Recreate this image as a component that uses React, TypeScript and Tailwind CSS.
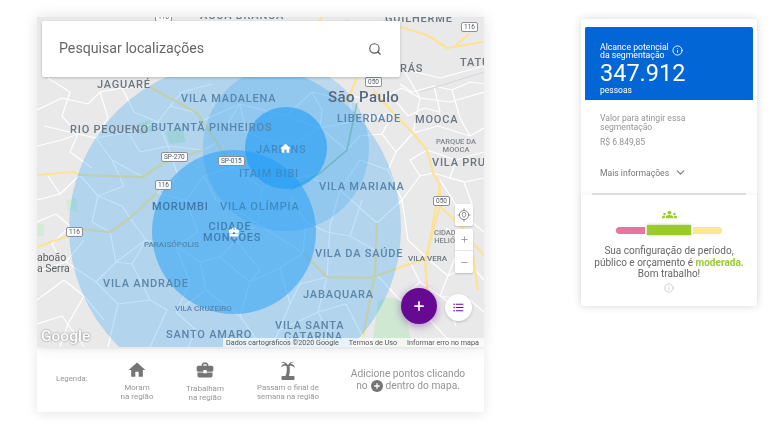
import { ChevronDown, Info, Minus, Plus, Search } from 'lucide-react';
import { MdBusinessCenter, MdFormatListBulleted, MdGroups, MdHome } from 'react-icons/md';

const minorRoads = [
  'M37 110 L62 98 L88 104 L100 92 L122 88 L150 87',
  'M48 78 L70 92 L62 116 L78 134 L70 152 L92 168',
  'M100 92 L108 118 L96 138 L112 160 L143 177',
  'M122 88 L134 112 L158 122 L170 106 L197 113',
  'M37 146 L62 140 L78 134 L96 138 L128 132 L158 122',
  'M158 122 L168 146 L203 150 L217 143',
  'M128 132 L140 152 L168 146',
  'M37 200 L60 194 L80 175 L98 196 L122 206 L130 218',
  'M37 222 L56 214 L70 226',
  'M98 196 L92 222 L110 232',
  'M130 218 L146 240 L176 246 L190 283',
  'M110 232 L116 262 L96 282 L118 304 L108 347',
  'M116 262 L146 240',
  'M118 304 L150 300 L167 310 L150 347',
  'M37 300 L64 280 L84 296 L68 324 L60 347',
  'M37 272 L66 262 L96 282',
  'M37 324 L62 316 L84 347',
  'M176 246 L200 262 L220 257 L250 282 L240 316 L262 347',
  'M157 193 L186 200 L204 176 L233 167',
  'M186 200 L198 232 L176 246',
  'M233 167 L262 188 L258 224 L303 253',
  'M262 188 L306 176 L320 173',
  'M250 282 L280 268 L303 253',
  'M204 120 L240 104 L286 116 L312 92 L357 103',
  'M240 104 L246 132 L286 148 L320 128 L347 150',
  'M286 116 L320 128 L352 122 L393 113',
  'M306 176 L340 190 L377 223',
  'M340 190 L330 226 L327 277',
  'M280 268 L290 304 L272 347',
  'M327 277 L318 312 L336 347',
  'M375 273 L400 300 L430 320 L455 347',
  'M405 72 L420 98 L413 133',
  'M400 68 L440 78 L484 66',
  'M420 98 L450 102 L484 92',
  'M413 133 L438 126 L470 136 L484 128',
  'M427 150 L456 160 L484 152',
  'M433 173 L464 182 L484 178',
  'M440 180 L462 214 L484 232',
  'M427 258 L448 276 L470 264 L484 280',
  'M448 276 L440 296 L470 300',
  'M377 223 L402 200 L420 176 L433 173',
  'M360 160 L388 170 L402 200',
  'M402 200 L408 240 L427 258',
  'M350 96 L378 100 L402 88 L420 98',
  // denser streets
  'M400 84 L412 92 L434 86 L452 90 L470 82 L484 84',
  'M434 86 L440 112 L430 124',
  'M452 90 L460 118 L470 136',
  'M395 100 L408 116 L424 108 L440 112',
  'M393 113 L382 134 L396 152 L388 170',
  'M382 134 L360 136 L347 150',
  'M396 152 L413 133',
  'M456 160 L450 178 L464 182 L472 204',
  'M420 176 L410 160 L427 150',
  'M410 262 L420 282 L404 296',
  'M420 282 L446 300 L456 326',
  'M470 300 L484 312',
  'M446 228 L462 240 L448 276',
  'M60 194 L48 176 M70 226 L52 244 L62 262',
  'M84 296 L104 320',
  'M66 262 L84 240',
  'M146 240 L132 264 L150 300',
  'M132 264 L116 262',
  'M190 283 L176 312 L196 330 L188 347',
  'M200 262 L206 290 L240 316',
  'M206 290 L176 312',
  'M258 224 L236 240 L220 257',
  'M236 240 L260 270 L250 282',
  'M204 176 L216 200 L236 210 L258 224',
  'M168 146 L178 176 L157 193',
  'M112 160 L124 186 L98 196',
  'M78 134 L44 126',
  'M170 106 L182 92 L212 84',
  'M240 104 L226 126 L246 132',
  'M312 92 L322 110 L320 128',
  'M352 122 L350 96',
  'M360 160 L344 184',
  'M362 200 L350 236 L375 250',
  'M350 236 L327 232 L306 222 L303 253',
  'M306 222 L290 196',
  'M327 277 L300 284 L290 304',
  'M318 312 L346 304 L363 337',
  'M280 330 L318 312',
];

const highways = [
  'M400 27 L427 35 L447 48 L483 42',
  'M470 33 L455 46',
  'M357 77 L350 95 L345 102',
  'M373 90 L393 113 L413 133 L427 150 L433 173 L440 185 L440 206',
  'M37 175 L73 172 L80 175 L143 177 L163 163 L203 150',
  'M37 247 L65 237 L80 229 L110 232 L130 218 L157 193',
  'M150 87 L197 113 L217 143 L233 167',
  'M377 223 L375 273 L363 337',
  'M303 253 L327 277 L370 278 L427 258 L433 223 L440 185',
  'M440 206 L470 235 L478 290',
  'M440 206 L425 260 L428 300',
  'M322 17 L312 30 L318 46',
  'M484 255 L470 240',
];

const labels = [
  { text: 'AGUA BRANCA', cls: 'left-[163px] top-[-8px] text-[#6b7682]' },
  { text: 'GUILHERME', cls: 'left-[348px] top-[-5px] text-[#6b7682]' },
  { text: 'TATU', cls: 'left-[423px] top-[39px] text-[#6b7682]' },
  { text: 'RÁS', cls: 'left-[363px] top-[45px] text-[#6b7682]' },
  { text: 'JAGUARÉ', cls: 'left-[60px] top-[61px] text-[#6b7682]' },
  { text: 'VILA MADALENA', cls: 'left-[144px] top-[75px] text-[#5a86ab]' },
  { text: 'RIO PEQUENO', cls: 'left-[33px] top-[106px] text-[#6b7682]' },
  { text: 'BUTANTÃ PINHEIROS', cls: 'left-[114px] top-[104px] text-[#5a86ab]' },
  { text: 'LIBERDADE', cls: 'left-[300px] top-[95px] text-[#5a86ab]' },
  { text: 'MOOCA', cls: 'left-[378px] top-[96px] text-[#6b7682]' },
  { text: 'JARDINS', cls: 'left-[219px] top-[126px] text-[#3f8cc5]' },
  { text: 'VILA PRU', cls: 'left-[395px] top-[139px] text-[#6b7682]' },
  { text: 'ITAIM BIBI', cls: 'left-[202px] top-[150px] text-[#3f8cc5]' },
  { text: 'VILA MARIANA', cls: 'left-[282px] top-[163px] text-[#5a86ab]' },
  { text: 'MORUMBI', cls: 'left-[115px] top-[183px] text-[#3f78a8]' },
  { text: 'VILA OLÍMPIA', cls: 'left-[183px] top-[183px] text-[#3f8cc5]' },
  { text: 'VILA ANDRADE', cls: 'left-[66px] top-[260px] text-[#5a86ab]' },
  { text: 'SANTO AMARO', cls: 'left-[129px] top-[311px] text-[#5a86ab]' },
  { text: 'VILA DA SAÚDE', cls: 'left-[278px] top-[230px] text-[#5a86ab]' },
  { text: 'JABAQUARA', cls: 'left-[266px] top-[271px] text-[#5a86ab]' },
  { text: 'VILA SANTA', cls: 'left-[238px] top-[302px] text-[#5a86ab]' },
  { text: 'CATARINA', cls: 'left-[247px] top-[313px] text-[#5a86ab]' },
];

const smallLabels = [
  { text: 'PARAISÓPOLIS', cls: 'left-[107px] top-[223px] text-[#5a86ab]' },
  { text: 'VILA CRUZEIRO', cls: 'left-[138px] top-[287px] text-[#5a86ab]' },
  { text: 'VILA VERA', cls: 'left-[371px] top-[237px] text-[#6b7682]' },
];

const shields = [
  { text: '116', cls: 'left-[118px] top-[-5px]' },
  { text: '116', cls: 'left-[424px] top-[5px]' },
  { text: '116', cls: 'left-[29px] top-[210px]' },
  { text: '116', cls: 'left-[118px] top-[163px]' },
  { text: '050', cls: 'left-[328px] top-[60px]' },
  { text: '050', cls: 'left-[396px] top-[179px]' },
  { text: 'SP-270', cls: 'left-[124px] top-[135px]' },
  { text: 'SP-015', cls: 'left-[181px] top-[139px]' },
];

function RoadMap() {
  return (
    <svg className="absolute inset-0" width="447" height="330" viewBox="37 17 447 330">
      <rect x="37" y="17" width="447" height="330" fill="#e9e9e9" />
      <path d="M378 302 Q392 292 404 304 L412 347 L372 347 Z" fill="#cfe8d2" />
      <path d="M66 200 L76 198 L78 212 L68 210 Z M37 224 L44 224 L44 236 L37 236 Z" fill="#d6ebd6" />
      <path d="M138 124 L150 120 L152 132 L140 134 Z M166 132 L182 128 L186 142 L170 144 Z" fill="#cde6d2" />
      <g fill="none" stroke="#ffffff" strokeWidth="1.2" strokeLinejoin="round">
        {minorRoads.map((d, i) => (
          <path key={i} d={d} />
        ))}
      </g>
      <g fill="none" stroke="#fde293" strokeWidth="2.2" strokeLinejoin="round">
        {highways.map((d, i) => (
          <path key={i} d={d} />
        ))}
      </g>
      <path d="M357 103 L347 150 L320 173 L290 190" fill="none" stroke="#a9cfa5" strokeWidth="1.6" />
      <path d="M345 20 L372 28 L392 16 M420 92 L484 72" fill="none" stroke="#d5d9de" strokeWidth="1.2" />
      <circle cx="235" cy="228" r="166" fill="#1e9bf5" fillOpacity="0.27" />
      <circle cx="286" cy="148" r="83" fill="#1e9bf5" fillOpacity="0.22" />
      <circle cx="234" cy="232" r="82" fill="#1e9bf5" fillOpacity="0.5" />
      <circle cx="286" cy="148" r="41" fill="#1e9bf5" fillOpacity="0.6" />
    </svg>
  );
}

function MapLabels() {
  return (
    <>
      {labels.map((l) => (
        <span key={l.text} className={`absolute text-[11px] font-medium leading-[14px] tracking-[0.8px] whitespace-nowrap ${l.cls}`}>
          {l.text}
        </span>
      ))}
      {smallLabels.map((l) => (
        <span key={l.text} className={`absolute text-[8px] leading-[10px] font-medium whitespace-nowrap ${l.cls}`}>
          {l.text}
        </span>
      ))}
      <span className="absolute left-[291px] top-[71px] text-[15px] leading-[18px] font-medium tracking-[0.4px] text-[#56677b]">São Paulo</span>
      <span className="absolute left-[166px] top-[204px] w-[54px] text-center text-[11px] leading-[11px] font-medium tracking-[0.8px] text-[#3f80b0]">
        CIDADE MONÇÕES
      </span>
      <span className="absolute left-[397px] top-[121px] w-[44px] text-center text-[7.5px] leading-[7.5px] font-medium text-[#80858a]">
        PARQUE DA MOOCA
      </span>
      <span className="absolute left-[388px] top-[212px] w-[44px] text-center text-[7.5px] leading-[7.5px] font-medium text-[#80858a]">
        CIDADE HELIÓP
      </span>
      <span className="absolute left-[0px] top-[235px] text-[10.5px] leading-[11px] text-[#5d6166] whitespace-nowrap">
        aboão
        <br />a Serra
      </span>
      {shields.map((s) => (
        <span
          key={s.cls}
          className={`absolute flex h-[10px] items-center rounded-[2px] border border-[#8a9099] bg-white/90 px-[2px] text-[6.5px] leading-none text-[#555b63] ${s.cls}`}
        >
          {s.text}
        </span>
      ))}
    </>
  );
}

function App() {
  return (
    <div className="flex h-[426px] w-[774px] overflow-hidden bg-white font-['Roboto',sans-serif] blur-[0.35px]">
      <div className="mt-[17px] ml-[37px] flex w-[447px] flex-col gap-[2px]">
        <div className="relative h-[330px] overflow-hidden shadow-[0_0_14px_rgba(0,0,0,0.12)]">
          <RoadMap />
          <MapLabels />

          <MdHome className="absolute left-[242px] top-[125px] text-white" size={13} />
          <MdBusinessCenter className="absolute left-[191px] top-[209px] text-white" size={12} />

          <div className="absolute top-[4px] left-[5px] flex h-[56px] w-[358px] items-center justify-between rounded-[2px] bg-white pr-[18px] pl-[17px] shadow-[0_1px_3px_rgba(0,0,0,0.2)]">
            <span className="text-[14.2px] text-[#666]">Pesquisar localizações</span>
            <Search size={14} strokeWidth={2} className="text-[#555]" />
          </div>

          <span className="absolute bottom-[0px] left-[4px] text-[15.5px] leading-[21px] font-medium text-white [text-shadow:0_0_2px_rgba(0,0,0,0.55)]">
            Google
          </span>
          <div className="absolute right-0 bottom-0 flex h-[9px] w-[261px] items-center gap-[10px] bg-white/70 pl-[3px] text-[7.2px] leading-none whitespace-nowrap text-[#555]">
            <span>Dados cartográficos ©2020 Google</span>
            <span>Termos de Uso</span>
            <span>Informar erro no mapa</span>
          </div>

          <div className="absolute top-[187px] left-[418px] flex h-[22px] w-[18px] items-center justify-center rounded-[2px] bg-white shadow-[0_1px_2px_rgba(0,0,0,0.2)]">
            <svg width="14" height="14" viewBox="0 0 14 14" fill="none" stroke="#888" strokeWidth="1">
              <circle cx="7" cy="7" r="4.6" />
              <path d="M7 0.5V2.4M7 11.6V13.5M0.5 7H2.4M11.6 7H13.5" />
              <path d="M7 4.4a1.9 1.9 0 0 1 1.9 1.9C8.9 7.7 7 9.6 7 9.6S5.1 7.7 5.1 6.3A1.9 1.9 0 0 1 7 4.4Z" />
            </svg>
          </div>
          <div className="absolute top-[212px] left-[418px] flex w-[18px] flex-col rounded-[2px] bg-white shadow-[0_1px_2px_rgba(0,0,0,0.2)]">
            <div className="flex h-[22px] items-center justify-center border-b border-[#e6e6e6]">
              <Plus size={9} className="text-[#888]" />
            </div>
            <div className="flex h-[22px] items-center justify-center">
              <Minus size={9} className="text-[#888]" />
            </div>
          </div>

          <div className="absolute top-[271px] left-[364px] flex size-[36px] items-center justify-center rounded-full bg-[#660a93] shadow-[0_2px_8px_rgba(102,10,147,0.45)]">
            <Plus size={14} strokeWidth={3} className="text-white" />
          </div>
          <div className="absolute top-[277px] left-[408px] flex size-[27px] items-center justify-center rounded-full bg-white shadow-[0_1px_3px_rgba(0,0,0,0.2)]">
            <MdFormatListBulleted size={13} className="text-[#660a93]" />
          </div>
        </div>

        <div className="flex h-[63px] items-center rounded-[2px] pl-[19px] text-center text-[#959595] shadow-[0_2px_12px_rgba(0,0,0,0.1)]">
          <span className="w-[47px] pb-[3px] text-left text-[7.8px]">Legenda:</span>
          <div className="flex w-[68px] flex-col items-center text-[8px] leading-[9px]">
            <MdHome size={20} className="text-[#757575]" />
            <span className="mt-[3px]">
              Moram
              <br />
              na região
            </span>
          </div>
          <div className="flex w-[68px] flex-col items-center text-[8px] leading-[9px]">
            <MdBusinessCenter size={20} className="text-[#757575]" />
            <span className="mt-[4px]">
              Trabalham
              <br />
              na região
            </span>
          </div>
          <div className="flex w-[98px] flex-col items-center text-[7.8px] leading-[9px]">
            <svg width="18" height="20" viewBox="0 0 18 20" fill="#757575">
              <path d="M9 5C7 2 4 1 1.500 3c2-.4 3.500 0 4.500 1C4 4 2.500 5 2 7.500 3.500 6 5.500 5.500 7.500 6 8 9 8 13 6.500 16H10c1-3.500 1-7 .5-10 1.500-.5 3.500 0 5.500 2-.5-2.500-2-4-4.500-4.500 1-1 2.500-1.500 4-1C14 1 11 2 9 5Z" />
              <rect x="2.500" y="16" width="13" height="4" rx="1" />
            </svg>
            <span className="mt-[3px]">
              Passam o final de
              <br />
              semana na região
            </span>
          </div>
          <div className="w-[142px] pb-[1px] text-[10.2px] leading-[11.5px]">
            Adicione pontos clicando
            <div className="flex items-center justify-center gap-[3px]">
              no
              <span className="flex size-[12px] items-center justify-center rounded-full bg-[#757575]">
                <Plus size={8} strokeWidth={4} className="text-white" />
              </span>
              dentro do mapa.
            </div>
          </div>
        </div>
      </div>

      <div className="mt-[19px] ml-[97px] flex h-[287px] w-[176px] flex-col rounded-[3px] shadow-[0_0_8px_rgba(0,0,0,0.16)]">
        <div className="mx-[4px] mt-[8px] flex h-[73px] flex-col rounded-t-[2px] bg-[#0366d6] pt-[16px] pl-[15px] text-white">
          <div className="flex items-center gap-[3px] text-[8.7px] leading-[8px]">
            <span>
              Alcance potencial
              <br />
              da segmentação
            </span>
            <Info size={11} className="mt-[-1px]" />
          </div>
          <span className="mt-[2px] text-[23.5px] leading-[24px]">347.912</span>
          <span className="mt-[1px] text-[8.5px] leading-[9px]">pessoas</span>
        </div>
        <div className="flex flex-col px-[19px] text-[#959595]">
          <p className="mt-[14px] text-[8.6px] leading-[8.5px]">
            Valor para atingir essa
            <br />
            segmentação
          </p>
          <p className="mt-[6px] text-[8.6px] leading-[10px]">R$ 6.849,85</p>
          <div className="mt-[19px] flex items-center gap-[5px] text-[8.6px] leading-[10px] text-[#777]">
            Mais informações
            <ChevronDown size={13} className="text-[#777]" />
          </div>
        </div>
        <div className="mx-[11px] mt-[14px] h-[2px] bg-[#e4e4e4]" />
        <div className="flex flex-1 flex-col items-center rounded-b-[3px] pt-[12px] shadow-[0_-2px_4px_rgba(0,0,0,0.04)]">
          <MdGroups size={15} className="text-[#9acb34]" />
          <div className="mt-[3px] flex items-center gap-[2px]">
            <div className="h-[7px] w-[29px] rounded-l-full bg-[#e5769f]" />
            <div className="h-[10px] w-[44px] bg-[#9acb2a] shadow-[0_0_3px_rgba(120,160,30,0.6)]" />
            <div className="h-[7px] w-[29px] rounded-r-full bg-[#fde88f]" />
          </div>
          <p className="mt-[10px] w-[170px] text-center text-[10px] leading-[11.5px] text-[#666]">
            Sua configuração de período,
            <br />
            público e orçamento é <span className="font-bold text-[#9acb34]">moderada.</span>
            <br />
            Bom trabalho!
          </p>
          <Info size={10} className="mt-[3px] text-[#c8c8c8]" />
        </div>
      </div>
    </div>
  );
}

export default App;
